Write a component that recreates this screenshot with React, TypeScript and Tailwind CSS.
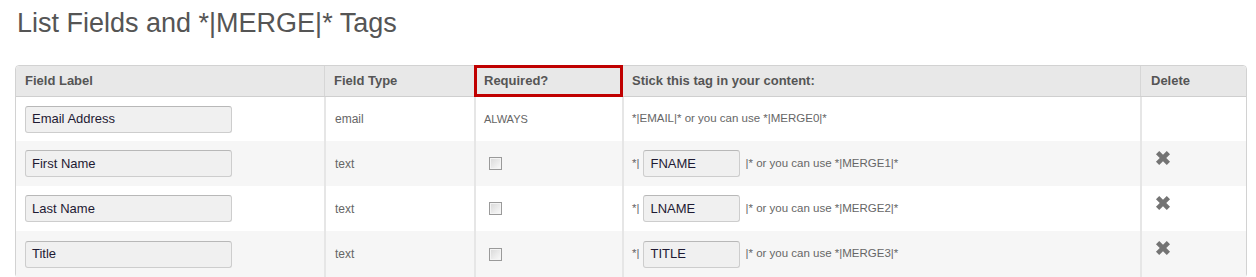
import React from "react";

const rows = [
  { label: "Email Address", type: "email", tag: null as string | null, merge: "*|EMAIL|* or you can use *|MERGE0|*", del: false },
  { label: "First Name", type: "text", tag: "FNAME", merge: "|* or you can use *|MERGE1|*", del: true },
  { label: "Last Name", type: "text", tag: "LNAME", merge: "|* or you can use *|MERGE2|*", del: true },
  { label: "Title", type: "text", tag: "TITLE", merge: "|* or you can use *|MERGE3|*", del: true },
];

function XIcon() {
  return (
    <svg width="16" height="16" viewBox="0 0 16 16">
      <path d="M2.6 2.6 L13.4 13.4 M13.4 2.6 L2.6 13.4" stroke="#747474" strokeWidth="4.6" strokeLinecap="butt" fill="none" />
    </svg>
  );
}

function Checkbox() {
  return (
    <div className="ml-[5px] w-[13px] h-[13px] border border-[#9a9a9a] bg-gradient-to-br from-[#d8d8d8] to-[#fbfbfb] shadow-[inset_0_0_0_1px_#f4f4f4]" />
  );
}

export default function App() {
  const grid = "grid grid-cols-[308px_150px_148px_518px_105px]";
  const heights = ["h-[44px]", "h-[45px]", "h-[45px]", "h-[46px]"];
  return (
    <div className="w-[1256px] h-[277px] overflow-hidden bg-white font-['Liberation_Sans',Arial,sans-serif]">
      <h1 className="pl-[17px] pt-[8px] text-[27px] leading-[31px] text-[#555555] font-normal">
        List Fields and *|MERGE|* Tags
      </h1>
      <div className="ml-[15px] mt-[26px] w-[1232px] border border-[#d2d2d2] rounded-[4px]">
        <div className={`${grid} h-[31px] bg-[#e8e8e8] border-b border-[#cfcfcf] rounded-t-[4px] text-[13px] font-bold text-[#555555]`}>
          <div className="flex items-center pl-[9px]">Field Label</div>
          <div className="flex items-center pl-[9px] border-l border-[#d6d6d6]">Field Type</div>
          <div className="relative flex items-center pl-[9px] border-l border-[#d6d6d6]">
            Required?
            <span className="absolute -top-[1px] -bottom-[1px] -left-[1px] -right-[1px] border-[3px] border-[#c00000]" />
          </div>
          <div className="flex items-center pl-[9px] border-l border-[#d6d6d6]">Stick this tag in your content:</div>
          <div className="flex items-center pl-[10px] border-l border-[#d6d6d6]">Delete</div>
        </div>
        {rows.map((r, i) => (
          <div
            key={i}
            className={`${grid} ${heights[i]} ${i % 2 === 1 ? "bg-[#f6f6f6]" : "bg-white"}`}
          >
            <div className="flex items-center pl-[9px]">
              <div className="w-[207px] h-[27px] flex items-center pl-[6px] bg-[#f0f0f0] border border-[#cdcdcd] border-t-[#b8b8b8] rounded-[3px] text-[13px] text-[#1e1a33]">
                {r.label}
              </div>
            </div>
            <div className="flex items-center pl-[9px] border-l-2 border-[#e6e6e6] text-[12px] text-[#666666]">
              {r.type}
            </div>
            <div className="flex items-center pl-[8px] border-l-2 border-[#e6e6e6] text-[11px] text-[#666666]">
              {i === 0 ? "ALWAYS" : <Checkbox />}
            </div>
            <div className="flex items-center pl-[8px] border-l-2 border-[#e6e6e6] text-[11.5px] text-[#666666]">
              {r.tag ? (
                <>
                  <span>*|</span>
                  <div className="ml-[4px] w-[97px] h-[27px] flex items-center pl-[6px] bg-[#f0f0f0] border border-[#cdcdcd] border-t-[#b8b8b8] rounded-[3px] text-[13px] text-[#1e1a33]">
                    {r.tag}
                  </div>
                  <span className="ml-[5px]">{r.merge}</span>
                </>
              ) : (
                <span>{r.merge}</span>
              )}
            </div>
            <div className="flex items-center pl-[13px] border-l-2 border-[#e6e6e6]">
              {r.del && (
                <div className="mb-[12px]">
                  <XIcon />
                </div>
              )}
            </div>
          </div>
        ))}
      </div>
    </div>
  );
}
